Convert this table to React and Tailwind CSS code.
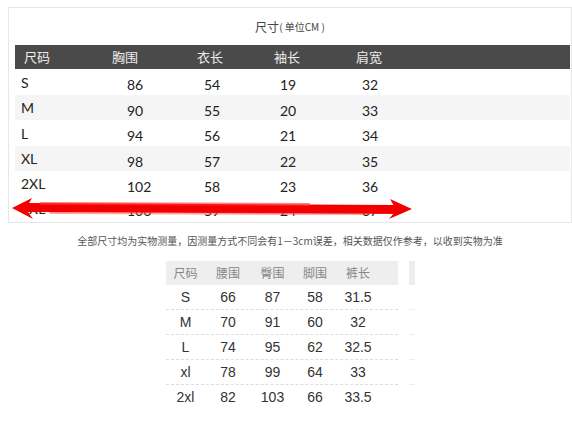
import React from 'react';

const topHead = [
  { label: '尺码', w: 'w-[90px]', pl: 'pl-[9px]' },
  { label: '胸围', w: 'w-[85px]', pl: 'pl-[7px]' },
  { label: '衣长', w: 'w-[78px]', pl: 'pl-[7px]' },
  { label: '袖长', w: 'w-[82px]', pl: 'pl-[6px]' },
  { label: '肩宽', w: 'w-[80px]', pl: 'pl-[6px]' },
];

const dataPad = ['pl-[6px]', 'pl-[22px]', 'pl-[14px]', 'pl-[12px]', 'pl-[12px]'];

const topRows = [
  { cells: ['S', '86', '54', '19', '32'], h: 'h-[26px]', bg: 'bg-white' },
  { cells: ['M', '90', '55', '20', '33'], h: 'h-[25px]', bg: 'bg-[#f5f5f5]' },
  { cells: ['L', '94', '56', '21', '34'], h: 'h-[26px]', bg: 'bg-white' },
  { cells: ['XL', '98', '57', '22', '35'], h: 'h-[25px]', bg: 'bg-[#f5f5f5]' },
  { cells: ['2XL', '102', '58', '23', '36'], h: 'h-[25px]', bg: 'bg-white' },
  { cells: ['3XL', '106', '59', '24', '37'], h: 'h-[24px]', bg: 'bg-white' },
];

const pantsHead = ['尺码', '腰围', '臀围', '脚围', '裤长'];
const pantsRows = [
  ['S', '66', '87', '58', '31.5'],
  ['M', '70', '91', '60', '32'],
  ['L', '74', '95', '62', '32.5'],
  ['xl', '78', '99', '64', '33'],
  ['2xl', '82', '103', '66', '33.5'],
];
const pantsW = ['w-[39px]', 'w-[46px]', 'w-[43px]', 'w-[42px]', 'w-[44px]'];

// hand drawn double arrow over the last row
function RedArrow() {
  return (
    <svg className="absolute left-[10px] top-[197px]" width="404" height="24" viewBox="0 0 404 24">
      <polygon points="14,6 388,8 389,17 14,15" fill="#f20000" />
      <polygon points="2,11 22,1 18,8 18,15 23,22" fill="#f20000" />
      <polygon points="402,12 380,2 384,9 384,16 379,22" fill="#f20000" />
      <polygon points="30,5 300,6 300,9 30,8" fill="#ff3030" opacity="0.6" />
      <polygon points="40,15 360,16 360,18 40,17" fill="#ff4a4a" opacity="0.5" />
    </svg>
  );
}

export default function App() {
  return (
    <div className="relative w-[572px] h-[423px] bg-white overflow-hidden" style={{ fontFamily: '"Noto Sans CJK SC", sans-serif' }}>
      <div className="ml-[8px] mt-[7px] w-[564px] h-[216px] border border-[#e6e6e6] overflow-hidden">
        <div className="h-[37px] flex items-center justify-center text-[#444]">
          <span className="text-[12px]">尺寸</span>
          <span className="text-[10px]">( 单位CM )</span>
        </div>
        <div className="ml-[6px] mr-[1px]">
          <div className="flex h-[24px] items-center bg-[#4a4a4a] text-white/90 text-[13px]">
            {topHead.map((c) => (
              <div key={c.label} className={`${c.w} ${c.pl}`}>{c.label}</div>
            ))}
          </div>
          {topRows.map((r, i) => (
            <div key={i} className={`flex items-center ${r.h} ${r.bg} text-[14px] text-[#222]`} style={{ fontFamily: 'Lato, "Open Sans", sans-serif' }}>
              {r.cells.map((c, j) => (
                <div key={j} className={`${topHead[j].w} ${dataPad[j]} ${j > 0 ? 'pt-[5px]' : ''}`}>{c}</div>
              ))}
            </div>
          ))}
        </div>
      </div>
      <RedArrow />

      <p className="mt-[10px] text-center text-[10px] text-[#555] pl-[8px]">
        全部尺寸均为实物测量，因测量方式不同会有1－3cm误差，相关数据仅作参考，以收到实物为准
      </p>

      <div className="mt-[13px] ml-[166px] flex gap-[11px]">
        <div className="w-[232px]">
          <div className="flex h-[24px] items-center bg-[#eeeeee] text-[12px] text-[#888]">
            {pantsHead.map((h, j) => (
              <div key={h} className={`${pantsW[j]} text-center`}>{h}</div>
            ))}
          </div>
          {pantsRows.map((r, i) => (
            <div
              key={i}
              className={`flex h-[25px] items-center text-[14px] text-[#333] ${i < pantsRows.length - 1 ? 'border-b border-dashed border-[#dddddd]' : ''}`}
              style={{ fontFamily: '"Liberation Sans", Arial, sans-serif' }}
            >
              {r.map((c, j) => (
                <div key={j} className={`${pantsW[j]} text-center`}>{c}</div>
              ))}
            </div>
          ))}
        </div>
        <div className="w-[6px]">
          <div className="h-[24px] bg-[#eeeeee]" />
          {[0, 1, 2, 3].map((i) => (
            <div key={i} className="h-[25px] border-b border-dashed border-[#eeeeee]" />
          ))}
        </div>
      </div>
    </div>
  );
}
